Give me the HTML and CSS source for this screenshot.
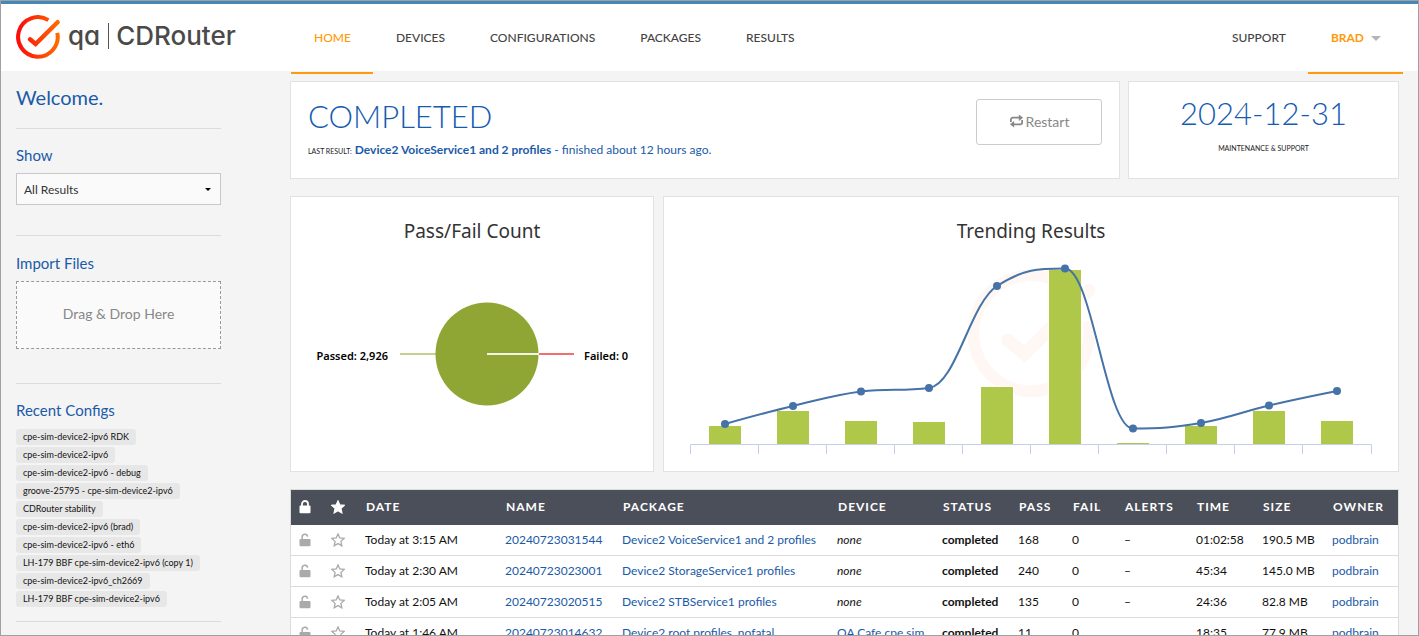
FILE: index.html
```html
<!DOCTYPE html>
<html lang="en">
<head>
<meta charset="utf-8">
<title>CDRouter</title>
<link rel="stylesheet" href="styles.css">
</head>
<body>
<svg class="defs" aria-hidden="true">
  <defs>
    <linearGradient id="flame" gradientUnits="userSpaceOnUse" x1="2" y1="0" x2="44" y2="0">
      <stop offset="0" stop-color="#fb0d0b"/>
      <stop offset="1" stop-color="#ff6d00"/>
    </linearGradient>
    <symbol id="mark" viewBox="0 0 44 44">
      <path d="M32.4 5.1A19.8 19.8 0 1 0 41.3 17.8" fill="none" stroke-width="4"/>
      <path d="M14 24.3 19.6 29 41.6 7.2" fill="none" stroke-width="4.4" stroke-linecap="round"/>
    </symbol>
    <symbol id="lock" viewBox="0 0 12 14">
      <path d="M3 6V4a3 3 0 0 1 6 0v2" fill="none" stroke="currentColor" stroke-width="1.8"/>
      <rect x="0.5" y="5.6" width="11" height="7.6" rx="1" fill="currentColor"/>
    </symbol>
    <symbol id="unlock" viewBox="0 0 12 14">
      <path d="M3.2 6.4V4.2a2.7 2.7 0 0 1 5.4-.6" fill="none" stroke="currentColor" stroke-width="1.5"/>
      <rect x="0.5" y="6" width="11" height="7.2" rx="1" fill="currentColor"/>
    </symbol>
    <symbol id="star" viewBox="0 0 14 14">
      <path d="M7 .9 8.8 4.9 13.1 5.4 9.9 8.4 10.8 12.8 7 10.6 3.2 12.8 4.1 8.4.9 5.4 5.2 4.9Z" stroke-width="1.3"/>
    </symbol>
  </defs>
</svg>
<div class="app">
  <header class="topbar">
    <a class="brand" href="#">
      <svg class="brand-mark" stroke="url(#flame)" aria-hidden="true"><use href="#mark"/></svg>
      <span class="brand-name"><span class="brand-qa">qa</span><span>CDRouter</span></span>
    </a>
    <nav class="nav">
      <a class="nav-link active" href="#">HOME</a>
      <a class="nav-link" href="#">DEVICES</a>
      <a class="nav-link" href="#">CONFIGURATIONS</a>
      <a class="nav-link" href="#">PACKAGES</a>
      <a class="nav-link" href="#">RESULTS</a>
      <a class="nav-link push" href="#">SUPPORT</a>
      <a class="nav-link active user" href="#">BRAD<span class="caret"></span></a>
    </nav>
  </header>
  <div class="layout">
    <aside class="sidebar">
      <h1 class="welcome">Welcome.</h1>
      <section class="side-section show">
        <label class="side-title" for="show">Show</label>
        <div class="select">
          <select id="show"><option>All Results</option></select>
          <span class="select-arrow"></span>
        </div>
      </section>
      <section class="side-section import">
        <h2 class="side-title">Import Files</h2>
        <button class="dropzone" type="button">Drag &amp; Drop Here</button>
      </section>
      <section class="side-section recent">
        <h2 class="side-title">Recent Configs</h2>
        <ul class="configs">
          <li><a href="#">cpe-sim-device2-ipv6 RDK</a></li>
          <li><a href="#">cpe-sim-device2-ipv6</a></li>
          <li><a href="#">cpe-sim-device2-ipv6 - debug</a></li>
          <li><a href="#">groove-25795 - cpe-sim-device2-ipv6</a></li>
          <li><a href="#">CDRouter stability</a></li>
          <li><a href="#">cpe-sim-device2-ipv6 (brad)</a></li>
          <li><a href="#">cpe-sim-device2-ipv6 - eth6</a></li>
          <li><a href="#">LH-179 BBF cpe-sim-device2-ipv6 (copy 1)</a></li>
          <li><a href="#">cpe-sim-device2-ipv6_ch2669</a></li>
          <li><a href="#">LH-179 BBF cpe-sim-device2-ipv6</a></li>
        </ul>
      </section>
      <div class="side-section"></div>
    </aside>
    <main class="main">
      <div class="row status-row">
        <section class="card status">
          <div>
            <h2 class="headline">COMPLETED</h2>
            <p class="last"><span class="tiny">LAST RESULT:</span> <a href="#"><b>Device2 VoiceService1 and 2 profiles</b> - finished about 12 hours ago.</a></p>
          </div>
          <button class="restart" type="button">
            <svg class="restart-icon" viewBox="0 0 16 14" aria-hidden="true">
              <path d="M2 8V5.500a2 2 0 0 1 2-2H11.500M14 6v2.500a2 2 0 0 1-2 2H4.500" fill="none" stroke="currentColor" stroke-width="1.9"/>
              <path d="M10.500 0 15 3.500 10.500 7ZM5.500 7 1 10.500 5.500 14Z" fill="currentColor"/>
            </svg>Restart
          </button>
        </section>
        <section class="card support">
          <h2 class="headline">2024-12-31</h2>
          <p class="tiny">MAINTENANCE &amp; SUPPORT</p>
        </section>
      </div>
      <div class="row chart-row">
        <section class="card">
          <svg class="chart" viewBox="0 0 362 274">
            <text class="chart-title" x="181" y="41">Pass/Fail Count</text>
            <path d="M109 157H145" stroke="#c5d08e" stroke-width="2"/>
            <path d="M247 157H283" stroke="#f07070" stroke-width="2"/>
            <circle cx="196" cy="157" r="51.5" fill="#8fa534"/>
            <path d="M196 157H248" stroke="#f1f4e4" stroke-width="2"/>
            <text class="chart-label end" x="97" y="163">Passed: 2,926</text>
            <text class="chart-label" x="293" y="163">Failed: 0</text>
          </svg>
        </section>
        <section class="card">
          <svg class="chart" viewBox="0 0 734 274">
            <use href="#mark" x="303" y="72" width="129" height="129" stroke="#fef7f3"/>
            <text class="chart-title" x="367" y="41">Trending Results</text>
            <g fill="#afc84a" stroke="#fff">
              <rect x="44.500" y="228.500" width="33" height="19"/>
              <rect x="112.500" y="213.500" width="33" height="34"/>
              <rect x="180.500" y="223.500" width="33" height="24"/>
              <rect x="248.500" y="224.500" width="33" height="23"/>
              <rect x="316.500" y="189.500" width="33" height="58"/>
              <rect x="384.500" y="72.500" width="33" height="175"/>
              <rect x="452.500" y="245.500" width="33" height="2"/>
              <rect x="520.500" y="228.500" width="33" height="19"/>
              <rect x="588.500" y="213.500" width="33" height="34"/>
              <rect x="656.500" y="223.500" width="33" height="24"/>
            </g>
            <path d="M26.500 257V247.500H707.500V257M94.500 248v9M162.500 248v9M230.500 248v9M298.500 248v9M366.500 248v9M434.500 248v9M502.500 248v9M570.500 248v9M638.500 248v9" fill="none" stroke="#c3d0ea"/>
            <path d="M61 227C61 227 101.800 215.500 129 209C156.200 202.500 169.800 198 197 194.500C224.200 191 237.800 194.500 265 191C292.200 187.500 305.800 106.500 333 89C360.200 71.500 373.800 71.500 401 71.500C428.200 71.500 441.800 231.500 469 231.500C496.200 231.500 509.800 230.600 537 226C564.200 221.400 577.800 214.900 605 208.500C632.200 202.100 673 194 673 194" fill="none" stroke="#4572a7" stroke-width="2"/>
            <g fill="#4572a7">
              <circle cx="61" cy="227" r="4"/><circle cx="129" cy="209" r="4"/><circle cx="197" cy="194.500" r="4"/><circle cx="265" cy="191" r="4"/><circle cx="333" cy="89" r="4"/><circle cx="401" cy="71.500" r="4"/><circle cx="469" cy="231.500" r="4"/><circle cx="537" cy="226" r="4"/><circle cx="605" cy="208.500" r="4"/><circle cx="673" cy="194" r="4"/>
            </g>
          </svg>
        </section>
      </div>
      <table class="results">
        <colgroup>
          <col class="c-lock"><col class="c-star"><col class="c-date"><col class="c-name"><col class="c-package"><col class="c-device"><col class="c-status"><col class="c-pass"><col class="c-fail"><col class="c-alerts"><col class="c-time"><col class="c-size"><col class="c-owner">
        </colgroup>
        <thead>
          <tr><th class="icon"><svg class="i-lock" aria-hidden="true"><use href="#lock"/></svg></th><th class="icon"><svg class="i-star full" aria-hidden="true"><use href="#star"/></svg></th><th>DATE</th><th>NAME</th><th>PACKAGE</th><th>DEVICE</th><th>STATUS</th><th>PASS</th><th>FAIL</th><th>ALERTS</th><th>TIME</th><th>SIZE</th><th>OWNER</th></tr>
        </thead>
        <tbody>
          <tr><td class="icon"><svg class="i-lock" aria-hidden="true"><use href="#unlock"/></svg></td><td class="icon"><svg class="i-star" aria-hidden="true"><use href="#star"/></svg></td><td>Today at 3:15 AM</td><td><a href="#">20240723031544</a></td><td><a href="#">Device2 VoiceService1 and 2 profiles</a></td><td><i>none</i></td><td><b>completed</b></td><td>168</td><td>0</td><td>–</td><td>01:02:58</td><td>190.5 MB</td><td><a href="#">podbrain</a></td></tr>
          <tr><td class="icon"><svg class="i-lock" aria-hidden="true"><use href="#unlock"/></svg></td><td class="icon"><svg class="i-star" aria-hidden="true"><use href="#star"/></svg></td><td>Today at 2:30 AM</td><td><a href="#">20240723023001</a></td><td><a href="#">Device2 StorageService1 profiles</a></td><td><i>none</i></td><td><b>completed</b></td><td>240</td><td>0</td><td>–</td><td>45:34</td><td>145.0 MB</td><td><a href="#">podbrain</a></td></tr>
          <tr><td class="icon"><svg class="i-lock" aria-hidden="true"><use href="#unlock"/></svg></td><td class="icon"><svg class="i-star" aria-hidden="true"><use href="#star"/></svg></td><td>Today at 2:05 AM</td><td><a href="#">20240723020515</a></td><td><a href="#">Device2 STBService1 profiles</a></td><td><i>none</i></td><td><b>completed</b></td><td>135</td><td>0</td><td>–</td><td>24:36</td><td>82.8 MB</td><td><a href="#">podbrain</a></td></tr>
          <tr><td class="icon"><svg class="i-lock" aria-hidden="true"><use href="#unlock"/></svg></td><td class="icon"><svg class="i-star" aria-hidden="true"><use href="#star"/></svg></td><td>Today at 1:46 AM</td><td><a href="#">20240723014632</a></td><td><a href="#">Device2 root profiles, nofatal</a></td><td><a href="#">QA Cafe cpe sim</a></td><td><b>completed</b></td><td>11</td><td>0</td><td></td><td>18:35</td><td>77.9 MB</td><td><a href="#">podbrain</a></td></tr>
        </tbody>
      </table>
    </main>
  </div>
</div>
</body>
</html>
```
FILE: styles.css
```css
* { box-sizing: border-box; }
body {
  margin: 0;
  font: 12px/16px Lato, "Open Sans", sans-serif;
  color: #111;
  background: #f4f4f4;
}
h1, h2, p, ul { margin: 0; padding: 0; font-weight: 400; }
a { color: #1a5aa8; text-decoration: none; }
button, select { font-family: inherit; }
.defs { position: absolute; width: 0; height: 0; }
.app {
  height: 100vh;
  overflow: hidden;
  border: 1px solid #a0a0a0;
}

/* Header */
.topbar {
  display: grid;
  grid-template-columns: 290px 1fr;
  height: 70px;
  padding-right: 15px;
  border-top: 3px solid #4687b9;
  background: #fff;
}
.brand { display: flex; align-items: flex-start; gap: 8px; padding: 11px 0 0 15px; color: #4a4a4a; }
.brand-mark { width: 44px; height: 44px; }
.brand-name {
  display: flex;
  align-items: center;
  padding-top: 8px;
  font: 500 26px/26px Inter, sans-serif;
  font-feature-settings: "cv11";
}
.brand-qa { margin-right: 7px; padding-right: 8px; border-right: 1px solid #555; }
.nav { display: flex; height: 70px; }
.nav-link {
  padding: 0 22px 0 23px;
  border-bottom: 2px solid transparent;
  font-size: 12px;
  line-height: 68px;
  color: #444;
  font-weight: 500;
}
.nav-link.active { border-color: #ff9a0a; color: #ff9a0a; }
.push { margin-left: auto; }
.user { display: flex; align-items: center; gap: 7px; font-weight: 700; }
.caret { border: 5px solid transparent; border-top-color: #b5b5b5; border-bottom: 0; }

/* Page columns */
.layout { display: grid; grid-template-columns: 205px minmax(0, 1fr); gap: 69px; padding: 10px 19px 0 15px; }

/* Sidebar */
.welcome { padding: 4px 0 18px; font-size: 20px; line-height: 25px; color: #1a5aa8; }
.side-section { border-top: 1px solid #dcdcdc; padding: 17px 0; }
.side-title { display: block; margin-bottom: 8px; font-size: 15px; line-height: 20px; color: #1a5aa8; }
.show { padding: 16px 0 30px; }
.import { padding-bottom: 34px; }
.recent { padding: 16px 0 14px; }
.select { position: relative; }
.select select {
  display: block;
  width: 100%;
  height: 32px;
  padding: 0 7px;
  border: 1px solid #c8c8c8;
  border-radius: 0;
  appearance: none;
  background: #fafafa;
  font-size: 12px;
  color: #333;
}
.select-arrow {
  position: absolute;
  top: 15px;
  right: 10px;
  border: 3px solid transparent;
  border-top-color: #000;
  border-bottom: 0;
  pointer-events: none;
}
.dropzone {
  display: block;
  width: 100%;
  height: 68px;
  padding: 0 0 3px;
  border: 1px dashed #999;
  background: #fafafa;
  font-size: 14px;
  color: #888;
}
.configs { display: grid; justify-items: start; gap: 2px; padding-top: 1px; list-style: none; }
.configs li { display: flex; }
.configs a { padding: 0 7px; border-radius: 3px; background: #e7e7e7; font-size: 9px; line-height: 16px; color: #111; }

/* Cards */
.row { display: grid; gap: 9px; margin-bottom: 17px; }
.status-row { grid-template-columns: 830fr 271fr; gap: 8px; }
.chart-row { grid-template-columns: 364fr 736fr; }
.card { border: 1px solid #e2e2e2; background: #fff; }
.status { display: flex; justify-content: space-between; align-items: flex-start; padding: 17px 17px 19px; }
.headline { font-size: 31px; line-height: 34px; font-weight: 300; color: #155bb0; }
.last { margin-top: 9px; }
.tiny { font-size: 7px; color: #222; }
.support { padding: 14px 17px 20px; text-align: center; }
.support .tiny { margin-top: 10px; }
.restart {
  display: flex;
  align-items: center;
  justify-content: center;
  gap: 2px;
  width: 126px;
  height: 46px;
  padding: 0 0 2px;
  border: 1px solid #ccc;
  border-radius: 3px;
  background: #fff;
  font-size: 14px;
  color: #888;
}
.restart-icon { width: 15px; height: 14px; }

/* Charts */
.chart { display: block; width: 100%; }
.chart-title { font: 19px "Noto Sans", sans-serif; fill: #333; text-anchor: middle; }
.chart-label { font: 600 11px "Noto Sans", sans-serif; fill: #000; }
.chart-label.end { text-anchor: end; }

/* Results table */
.results { width: 100%; table-layout: fixed; border-collapse: separate; border-spacing: 0; border: 1px solid #dcdcdc; background: #fff; }
th, td { padding: 0 0 0 9px; text-align: left; white-space: nowrap; }
th { height: 35px; padding: 0 0 2px 10px; background: #4b4f5a; color: #fff; font-size: 12px; font-weight: 700; letter-spacing: 1px; }
td { height: 31px; border-bottom: 1px solid #dcdcdc; }
.icon { padding-left: 8px; }
.i-lock { display: block; width: 12px; height: 14px; color: #aaa; }
.i-star { display: block; width: 14px; height: 14px; fill: none; stroke: #aaa; }
th .i-lock { color: #fff; }
.full { fill: #fff; stroke: #fff; }
.c-lock { width: 32px; }
.c-star { width: 33px; }
.c-date { width: 140px; }
.c-name { width: 117px; }
.c-package { width: 215px; }
.c-device { width: 105px; }
.c-status { width: 76px; }
.c-pass { width: 54px; }
.c-fail { width: 52px; }
.c-alerts { width: 72px; }
.c-time { width: 66px; }
.c-size { width: 70px; }
.c-owner { width: 75px; }
```
